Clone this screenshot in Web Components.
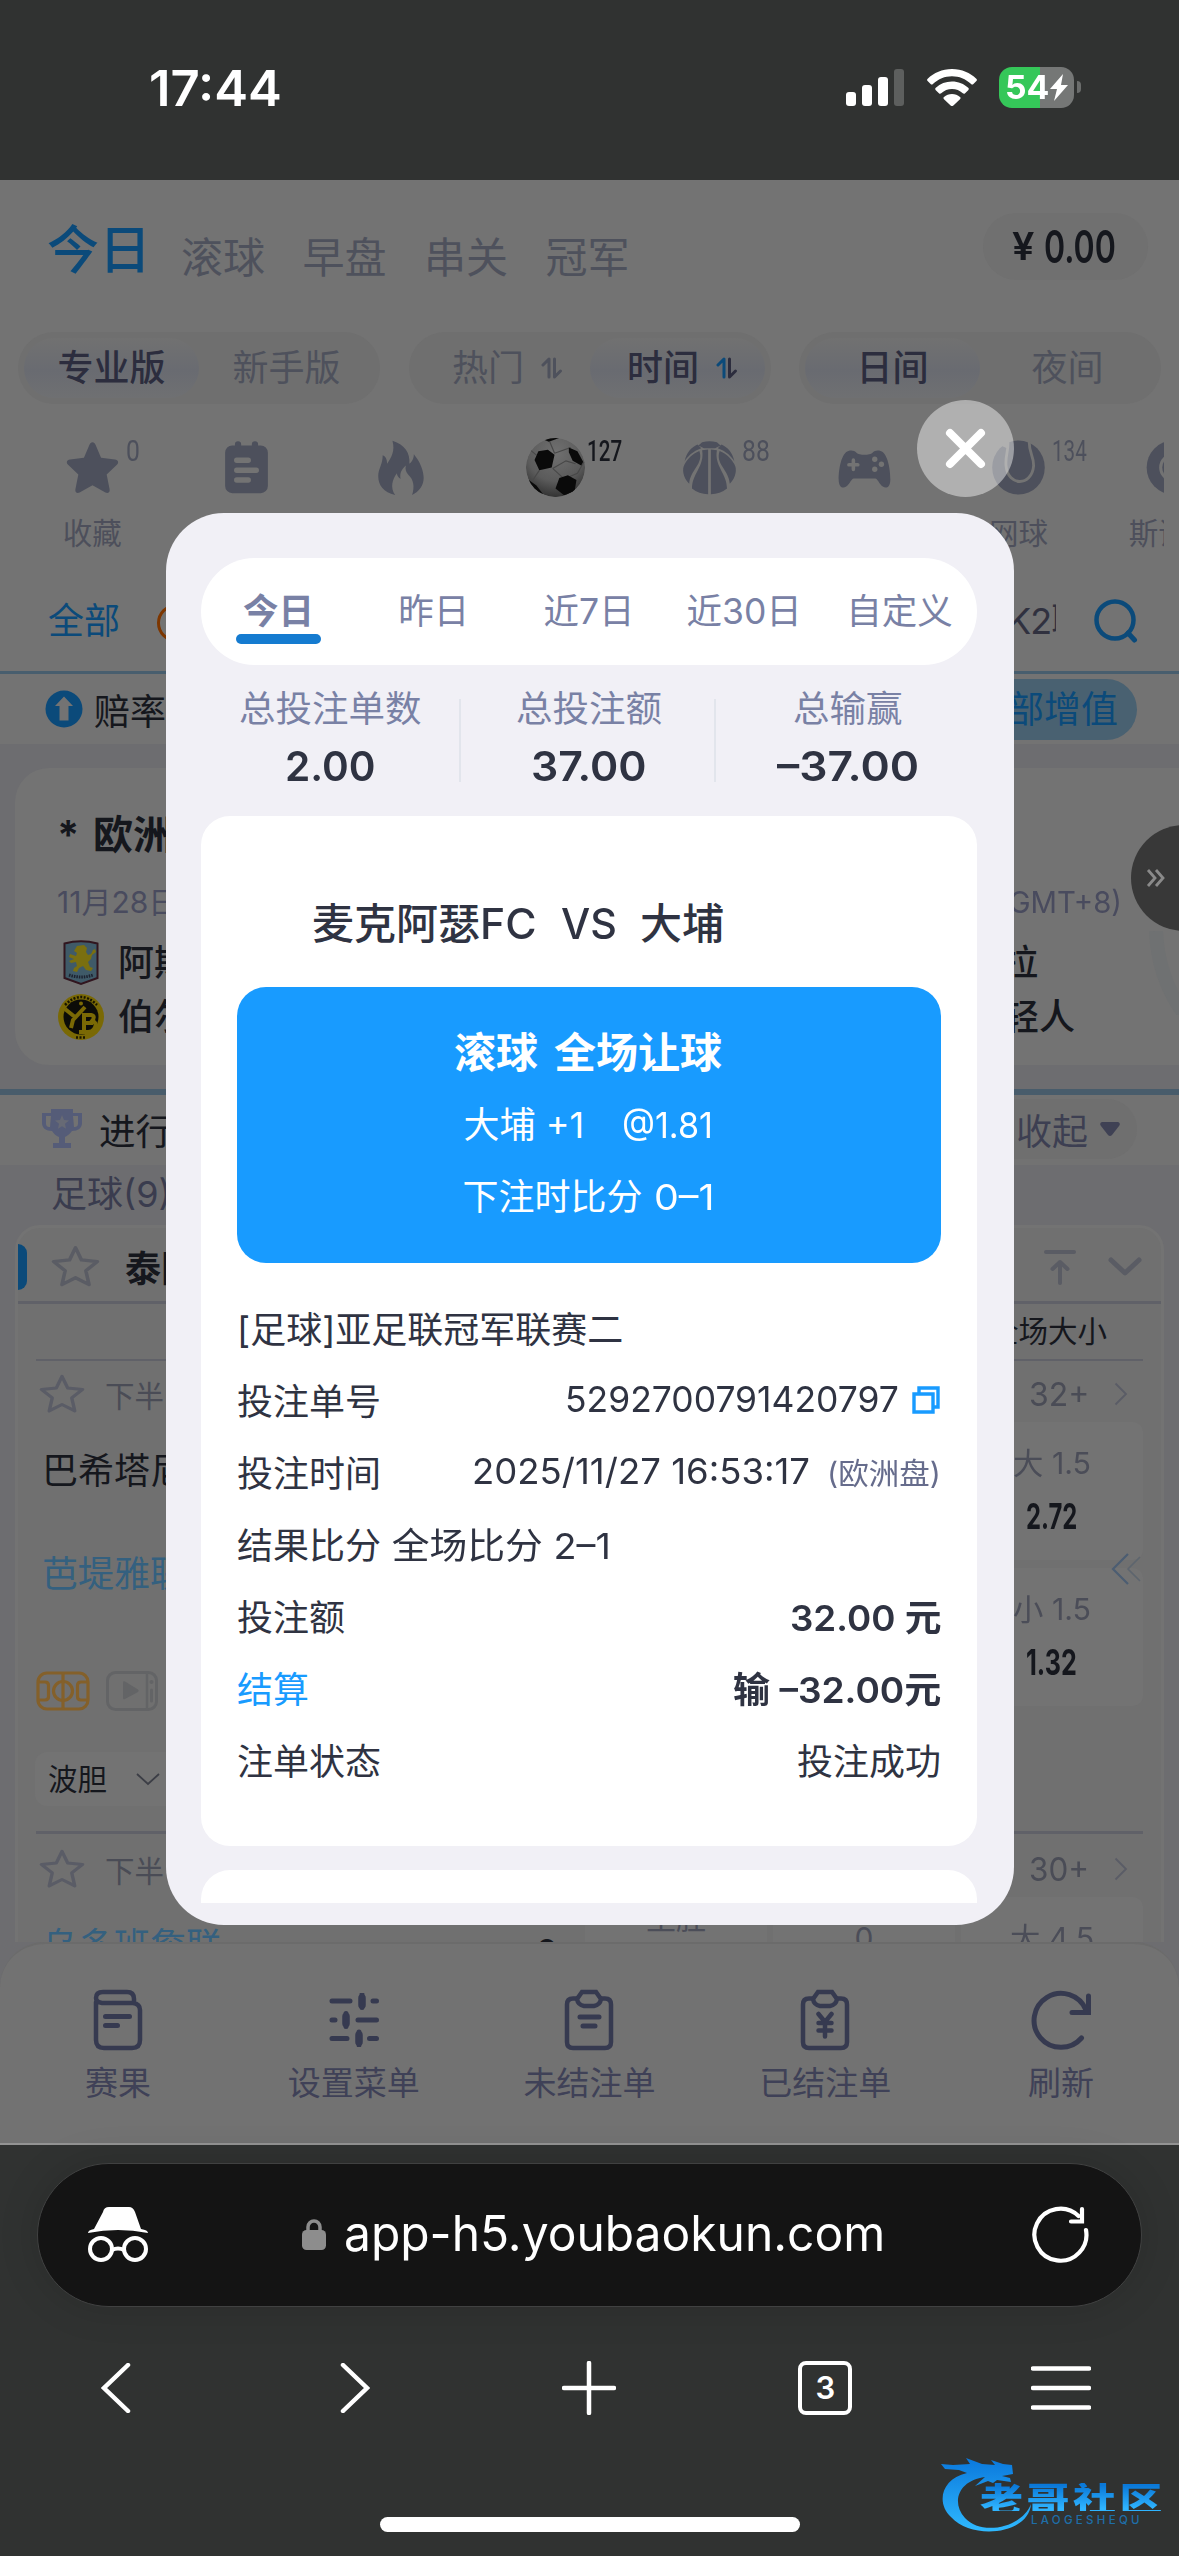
<!DOCTYPE html>
<html lang="zh-CN">
<head>
<meta charset="utf-8">
<title>已结注单</title>
<style>
html,body{margin:0;padding:0;background:#303231}
body{width:1179px;height:2556px;overflow:hidden;font-family:Inter,"Noto Sans CJK SC",sans-serif;
--ink:#15171d;--mute:#4e515c;--blue:#0b4a7a;--page:#737373;--grey:#6d6d70;--line:#606168;--text:#2f3342;--sky:#189bff}
</style>
</head>
<body>
<app-screen></app-screen>
<script>
const define=(name,css,html,setup)=>{
  const t=document.createElement('template');
  t.innerHTML=`<style>:host{display:block;box-sizing:border-box}*{box-sizing:border-box}svg{display:block;flex:none}${css}</style>${html}`;
  customElements.define(name,class extends HTMLElement{
    constructor(){super();this.attachShadow({mode:'open'}).appendChild(t.content.cloneNode(true))}
    connectedCallback(){if(setup)setup.call(this,this.shadowRoot)}
  });
};

/* Single line of text squeezed or stretched to a given width (w, in px). */
define('fit-text',':host{display:inline-block;white-space:pre;flex:none;text-align:left}span{display:inline-block;transform-origin:0 50%;white-space:pre}','<span><slot></slot></span>',function(r){
  const s=r.querySelector('span'),w=+this.getAttribute('w');
  const n=s.offsetWidth;
  this.style.width=w+'px';
  if(n)s.style.transform=`scaleX(${w/n})`;
});

/* Icon set */
const star='M32 3.5c1.7 0 2.6 1.2 3.4 2.8l6.2 14.2 15.6 1.7c3.8.5 4.6 3.6 2.2 5.8L47.9 38.6l3.3 16c.6 3.600-2 5-4.700 3.600L32 50.200 17.500 58.200c-2.700 1.400-5.300 0-4.700-3.600l3.300-16L4.600 28c-2.400-2.200-1.600-5.300 2.200-5.800l15.600-1.700 6.200-14.200C29.400 4.700 30.300 3.500 32 3.500z';
const icons={
 star:[64,62,`<path fill="currentColor" d="${star}"/>`],
 starline:[64,62,'<path fill="none" stroke="currentColor" stroke-width="4.500" stroke-linejoin="round" d="M32 5l7.500 17 20 2.200-14.500 12.600 4 19.200-17-9.500-17 9.500 4-19.200L4.500 24.200l20-2.200z"/>'],
 note:[64,62,'<path fill="currentColor" d="M16 7h3V6a3.500 3.500 0 0 1 7 0v1h12V6a3.500 3.500 0 0 1 7 0v1h3a8 8 0 0 1 8 8v36a8 8 0 0 1-8 8H16a8 8 0 0 1-8-8V15a8 8 0 0 1 8-8z"/><path stroke="#737373" stroke-width="6" stroke-linecap="round" d="M21 23h13M21 34h22M21 44.500h13"/>'],
 fire:[64,62,'<path fill="currentColor" d="M23 3c14 4 20 13 19 24 4-3 5-7 5-10 7 8 11 17 11 25 0 8-5 14-13 18 3-8 2-16-4-21-3-3-4-6-3-10-5 4-7 8-6 14-3-2-4-4-4-6-5 6-8 15-2 23C13 57 7 50 7 40c0-8 5-12 5-22 3 1 5 4 5 9 5-7 9-13 6-24z"/>'],
 soccer:[64,64,'<defs><radialGradient id="g" cx="50%" cy="25%" r="80%"><stop offset="0" stop-color="#707070"/><stop offset=".6" stop-color="#5b5b5b"/><stop offset="1" stop-color="#2c2c2c"/></radialGradient><clipPath id="c"><circle cx="32" cy="32" r="31"/></clipPath></defs><g clip-path="url(#c)"><circle cx="32" cy="32" r="31" fill="url(#g)"/><path fill="none" stroke="#484848" stroke-width="1.200" d="M31 17l17-6M29 33l12 11M15 35l-8 12M12 19L6 14M31 17l-5-12M41 44l14-6 7-12M29 33l14-8 10 3"/><path fill="#0a0a0a" d="M14 15l10-1.500 7 5-3 13.500-13 3-5-11zM46 11l9 4 6 11-2 4-9-5-4-9zM36 43l9-3 9 5-2 12-11 4-9-7zM4 45l8 6 7 9-2 3L3 53zM20 3l10-3 6 1-11 4z"/></g>'],
 basket:[64,62,'<path fill="currentColor" d="M24 4.500a29 29 0 0 1 16 0l4 3.500-6 3H26l-6-3zM19 7l4 4C14 14 8 20 5 25 7 16 12 10 19 7zM45 7l-4 4c9 3 15 9 18 14C57 16 52 10 45 7zM24 13l6.500-.800V60C24 60 18 58 13 54 13 38 27 30 24 13zM40 13l-6.500-.800V60C40 60 46 58 51 54 51 38 37 30 40 13zM21 14C26 28 11 34 10 49 3 42 2 33 5 28c4-6 8-11 16-14zM43 14C38 28 53 34 54 49c7-7 8-16 5-21-4-6-8-11-16-14z"/>'],
 pad:[64,62,'<path fill="currentColor" d="M14 13c4-1 7 0 9 2 3 3 15 3 18 0 2-2 5-3 9-2 8 2 11 20 11 31 0 9-5 10-8 8-5-3-6-9-9-9H20c-3 0-4 6-9 9-3 2-8 1-8-8 0-11 3-29 11-31z"/><g stroke="#737373" stroke-width="4" stroke-linecap="round"><path d="M19.500 23v10M14.500 28h10"/></g><g fill="#737373"><circle cx="43.500" cy="22" r="3"/><circle cx="43.500" cy="33" r="3"/><circle cx="51" cy="27.500" r="3"/></g>'],
 tennis:[64,62,'<circle cx="32" cy="31" r="29.500" fill="currentColor"/><path fill="none" stroke="#737373" stroke-width="3.200" d="M20 2c1 12-3 15-2 27 2 23 29 23 31 0 0-11-5-13-5-26"/><path fill="#737373" d="M14.500 0L20 0l1 6-2 4-5-2z"/>'],
 snooker:[64,62,'<circle cx="32" cy="31" r="29" fill="currentColor"/><circle cx="32" cy="31" r="15" fill="#737373"/><circle cx="32" cy="31" r="11.500" fill="currentColor"/>'],
 sort:[22,22,'<path fill="none" stroke="var(--a,currentColor)" stroke-width="3" stroke-linejoin="round" stroke-linecap="round" d="M2 8l6-6v18"/><path fill="none" stroke="currentColor" stroke-width="3" stroke-linejoin="round" stroke-linecap="round" d="M13.500 2v18l6-6"/>'],
 search:[44,44,'<circle cx="21" cy="21" r="18.500" fill="none" stroke="currentColor" stroke-width="4.500"/><path stroke="currentColor" stroke-width="5" stroke-linecap="round" d="M34 34l6.500 7"/>'],
 trophy:[40,40,'<path fill="currentColor" d="M9 0h22v4h9v10c0 5-4 8-10 8-2 3-5 5-7 6v6h6v5H11v-5h6v-6c-3-1-5-3-7-6-6 0-10-3-10-8V4h9zM9 7H4v7c0 3 1 4 4 4zM31 7l1 11c3 0 4-1 4-4V7z"/><path fill="#737373" opacity=".6" d="M20 6l2 5 5 .400-4 3.400 1 5-4-2.500-4 2.500 1-5-4-3.400 5-.400z"/>'],
 top:[32,36,'<path fill="none" stroke="currentColor" stroke-width="4" stroke-linecap="round" stroke-linejoin="round" d="M2 3h28M16 34V14M8.500 20L16 13l7.500 7"/>'],
 down:[34,20,'<path fill="none" stroke="currentColor" stroke-width="5" stroke-linecap="round" stroke-linejoin="round" d="M3 3l14 13L31 3"/>'],
 next:[14,24,'<path fill="none" stroke="#5a5c66" stroke-width="1.800" d="M1.500 1.500l10.500 10.500-10.500 10.500"/>'],
 pitch:[54,40,'<g fill="none" stroke="currentColor" stroke-width="3.200"><rect x="2" y="2" width="50" height="36" rx="9"/><circle cx="27" cy="20" r="9.500"/><path d="M27 2v36M2 11h7q3.500 0 3.500 3.500v11q0 3.500-3.500 3.500H2M52 11h-7q-3.500 0-3.500 3.500v11q0 3.500 3.500 3.500h7"/></g>'],
 play:[52,40,'<rect x="1.500" y="1.500" width="49" height="37" rx="8" fill="none" stroke="currentColor" stroke-width="3"/><path stroke="currentColor" stroke-width="2.500" d="M41 2v36"/><path fill="currentColor" d="M17 11.500q0-2 2-1l13 8q1.500 1.200 0 2.400l-13 7q-2 1-2-1z"/><circle cx="45.500" cy="11" r="2" fill="currentColor"/><path stroke="currentColor" stroke-width="3" stroke-linecap="round" d="M45.500 19v11"/>'],
 copy:[28,28,'<path fill="none" stroke="#189bff" stroke-width="3.400" d="M2 8h19v18H2zM7 7V2h19v19h-4"/>'],
 result:[50,62,'<g fill="none" stroke="currentColor" stroke-width="4.500" stroke-linecap="round" stroke-linejoin="round"><path d="M3 13v38q0 8 8 8h28q8 0 8-8V21q0-6-7-7H9q-6-1-6-5 0-6 7-6h24q7 0 7 7v4"/><path stroke-width="5" d="M12.500 27.500h24M12.500 36.500h12"/></g>'],
 sliders:[50,54,'<g stroke="currentColor" stroke-width="5" stroke-linecap="round"><path d="M3 8h18M33 1.500v13M44 8h3.500M3 27h3M17 20.500v13M29 27h18.500M3 45.500h15M30 39v13M40.500 45.500h7"/></g><g stroke="currentColor" stroke-width="7.500" stroke-linecap="round"><path d="M33 5v7M17 23.500v7M30 42v7"/></g>'],
 clip:[50,62,'<g fill="none" stroke="currentColor" stroke-width="4.500" stroke-linecap="round"><path d="M13 9.500H9q-6 0-6 6V53q0 6 6 6h32q6 0 6-6V15.500q0-6-6-6h-4"/><path d="M18 3h14l5 7q-1 6-7 7H20q-6-1-7-7z"/><path stroke-width="5" d="M16 28h19M19 37h12"/></g>'],
 clipyen:[50,62,'<g fill="none" stroke="currentColor" stroke-width="4.500" stroke-linecap="round"><path d="M13 9.500H9q-6 0-6 6V53q0 6 6 6h32q6 0 6-6V15.500q0-6-6-6h-4"/><path d="M18 3h14l5 7q-1 6-7 7H20q-6-1-7-7z"/><path d="M18.500 25l6.500 8 6.500-8M25 33v14.500M18.500 34h13M18.500 41.500h13"/></g>'],
 reload:[62,62,'<path fill="none" stroke="currentColor" stroke-width="5" stroke-linecap="round" d="M51.500 49A27 27 0 1 1 56 21M58.500 7v16.500H42"/>'],
 spy:[60,56,'<path fill="#fff" d="M15 5q1-5 6-5h20q4 0 6 5l6 17q7 1 7 4-30-6-60 0 0-3 6-4z"/><g fill="none" stroke="#fff" stroke-width="4"><circle cx="13" cy="42" r="11"/><circle cx="47" cy="42" r="11"/><path d="M24 43q6-3 12 0"/></g>'],
 lock:[26,32,'<rect x="1" y="11" width="24" height="20" rx="4.500" fill="#8d8d8d"/><path fill="none" stroke="#8d8d8d" stroke-width="3.500" d="M7 13V8a6 6 0 0 1 12 0v5"/>'],
 refresh:[58,58,'<path fill="none" stroke="#fff" stroke-width="4.200" stroke-linecap="round" d="M54 24A26 26 0 1 1 46.500 10M50 3v12.500H39"/>'],
 crest:[36,46,'<path fill="#3f5a68" stroke="#31161f" stroke-width="2" d="M1.500 3.500Q18-1 34.500 3.500V38L18 44 1.500 38z"/><path fill="#7a6f10" d="M14 6l7-1 3 3-1 4 2 3 3-1 2-4 2-1 1 3-4 3-1 4-3 3 2 5 3 1-2 3-5-1-3-4-4 2-2 4-4-1 1-3 3-2-1-4-5 1-2-2 5-2-5-2 1-3 6 2 1-3-3-2z"/><path stroke="#1c2230" stroke-width="3" stroke-dasharray="1.500 1" d="M6 35q12 4 24 0" fill="none"/>'],
 yb:[48,48,'<circle cx="24" cy="24" r="23" fill="#7a6905"/><circle cx="24" cy="24" r="17.500" fill="#0c0c08"/><path fill="none" stroke="#7a6905" stroke-width="4" d="M8 16l10 8M28 14L16 27l-2 8M25 22h9q5 1 1 6 6 2 2 8-2 3-6 3h-9M27 22v16M25 30h11"/><circle cx="24" cy="10.500" r="2" fill="#7a6905"/><path fill="none" stroke="#181500" stroke-width="2.500" stroke-dasharray="2 1.500" d="M8 12Q24-4 40 12M19 44.500h10"/>'],
 up:[38,38,'<circle cx="19" cy="19" r="18.500" fill="#0b4a7a"/><path fill="#737373" d="M19 6.500l9 9.500h-4.500v14.500h-9V16H10z"/>'],
 chevrons:[30,32,'<path fill="none" stroke="#4c5d72" stroke-width="2.200" d="M17 1L2 16l15 15"/><path fill="none" stroke="#5d656e" stroke-width="1.600" d="M29 4L17 16l12 12"/>']
};
define('ui-icon',':host{display:block;flex:none}','<div></div>',function(r){
  const [vw,vh,body]=icons[this.getAttribute('name')],w=this.getAttribute('w')||vw,h=this.getAttribute('h')||vh;
  r.querySelector('div').innerHTML=`<svg width="${w}" height="${h}" viewBox="0 0 ${vw} ${vh}" preserveAspectRatio="none">${body}</svg>`;
});

define('status-bar',`
:host{height:180px;background:#303231;display:flex;align-items:flex-start;padding:0 98px 0 149px;color:#fff}
.t{margin-top:63px;font:600 50px/50px Inter;margin-right:auto}
.sig{margin:69px 23px 0 0}.wifi{margin:69px 22px 0 0}
.bat{width:75px;height:41px;margin-top:67px;border-radius:13px;background:linear-gradient(90deg,#35c759 41px,#757776 41px);display:flex;align-items:center;padding-left:6px;font:700 33px/41px Inter}
.nub{width:4px;height:12px;border-radius:0 4px 4px 0;background:#6b6d6c;margin:81px 0 0 3px}`,`
<fit-text class="t" w="133">17:44</fit-text>
<svg class="sig" width="58" height="37"><g fill="#fff"><rect y="23" width="10" height="14" rx="3"/><rect x="16" y="16" width="10" height="21" rx="3"/><rect x="32" y="8" width="10" height="29" rx="3"/></g><rect x="48" width="10" height="37" rx="3" fill="#5d5f5e"/></svg>
<svg class="wifi" width="50" height="37" viewBox="0 0 50 37"><path fill="#fff" d="M25 0c10 0 18 3.800 24.300 9.700.8.800.8 1.600.1 2.300l-3 3c-.7.700-1.600.700-2.300 0C38.600 10 32.200 7.300 25 7.300S11.400 10 5.900 15c-.7.700-1.600.7-2.300 0l-3-3c-.7-.7-.7-1.500.1-2.300C7 3.800 15 0 25 0zM25 12.500c6.300 0 12 2.400 16.200 6.300.8.800.8 1.600 0 2.400l-3.100 3c-.7.700-1.500.7-2.300.1A16 16 0 0 0 25 20a16 16 0 0 0-10.800 4.300c-.8.600-1.600.6-2.300-.1l-3.100-3c-.8-.8-.8-1.600 0-2.400A23.700 23.700 0 0 1 25 12.500zM25 25c3 0 5.800 1.100 8 3 .800.700.8 1.500 0 2.300l-6.600 6.200c-.9.800-1.900.8-2.800 0L17 30.300c-.8-.8-.8-1.600 0-2.300 2.200-1.900 5-3 8-3z"/></svg>
<div class="bat"><fit-text w="44">54</fit-text><svg width="20" height="27" viewBox="0 0 20 27"><path fill="#fff" d="M14 0L1 15h7L5 27l14-16h-7z"/></svg></div><div class="nub"></div>`);

define('match-tabs',`
:host{height:152px;display:flex;align-items:flex-start;padding-left:47px;color:var(--mute);font-size:42px;line-height:42px}
b{font-weight:500;font-size:52px;line-height:52px;color:var(--blue);margin:45px 30px 0 0}
span{margin:57px 37.500px 0 0}
.bal{margin:33px 31px 0 auto;width:165px;height:67px;border-radius:34px;background:#707070;display:flex;align-items:center;justify-content:center;gap:10px;font:600 45px/67px Inter;color:var(--ink);padding-right:3px}
.y{font-size:38px}`,`
<b>今日</b><span>滚球</span><span>早盘</span><span>串关</span><span>冠军</span><div class="bal"><fit-text class="y" w="22">¥</fit-text><fit-text w="72">0.00</fit-text></div>`);

define('filter-pill',`
:host{height:72px;width:362px;border-radius:36px;background:#6f6f6f;display:flex;padding:6px;font-size:36px;line-height:60px;color:var(--mute)}
::slotted(*){flex:1;display:flex!important;justify-content:center;align-items:center;gap:17px;border-radius:30px}
::slotted([on]){font-weight:500;color:#2c2d3e;--a:#0b4a7a;background:linear-gradient(#717171,#696b71 55%,#6f7072)}`,'<slot></slot>');
define('filter-row',':host{height:72px;display:flex;gap:28.500px;padding-left:18px}.i{padding-left:11px}',`
<filter-pill><div on>专业版</div><div>新手版</div></filter-pill>
<filter-pill><div class="i">热门<ui-icon name="sort"></ui-icon></div><div class="i" on>时间<ui-icon name="sort"></ui-icon></div></filter-pill>
<filter-pill><div on>日间</div><div>夜间</div></filter-pill>`);

define('sport-item',`
:host{width:154.400px;flex:none;display:flex;flex-direction:column;align-items:center;color:#4d505c;white-space:nowrap}
.i{height:62px;display:flex;align-items:center;position:relative}
.n{position:absolute;left:62px;top:0;font:400 30px/30px Roboto;color:#4d505c}
:host([on]) .n{color:var(--ink);font-weight:500}
.l{font-size:29.500px;line-height:30px;margin-top:20px;color:#4d4f5b}`,
'<div class="i"><slot name="icon"></slot><div class="n"><slot name="n"></slot></div></div><div class="l"><slot></slot></div>');
define('sport-nav',':host{height:166px;display:flex;padding:32px 0 0 15px;margin-right:15px;overflow:hidden}',
[['star',57,57,'0',14,'收藏'],['note',57,57],['fire',57,59],['soccer',61,61,'127',35,'',1],['basket',59,58,'88',28],['pad',57,57],['tennis',57,57,'134',35,'网球'],['snooker',57,57,'',0,'斯诺克']]
.map(([i,w,h,n,nw,l,on])=>`<sport-item ${on?'on':''}><ui-icon slot="icon" name="${i}" w="${w}" h="${h}"></ui-icon>${n?`<fit-text slot="n" w="${nw}">${n}</fit-text>`:''}${l||''}</sport-item>`).join(''));

define('league-strip',`
:host{height:104px;border-bottom:3px solid #485e6e;display:flex;align-items:center;padding:0 41px 0 48px;font-size:36px;line-height:36px;color:var(--blue)}
i{width:38px;height:38px;border:3.500px solid #7d3600;border-radius:50%;margin:4px auto 0 37px}
.k{width:49px;overflow:hidden;white-space:nowrap;color:#30313f;margin-right:38px;letter-spacing:-1px}`,
'<span>全部</span><i></i><div class="k">K2联</div><ui-icon name="search"></ui-icon>');

define('odds-bar',`
:host{height:70px;display:flex;align-items:center;padding:0 42px 0 45px;font-size:36px;color:var(--ink)}
span{margin-left:11px;margin-right:auto}
.p{height:61px;border-radius:31px;background:#496171;color:var(--blue);line-height:61px;padding:0 19px;width:220px;text-align:right;font-size:37px}`,
'<ui-icon name="up"></ui-icon><span>赔率</span><div class="p">全部增值</div>');

define('match-card',`
:host{height:345px;background:var(--grey);padding:24px 0 24px 15px;color:var(--ink)}
.c{height:297px;background:var(--page);border-radius:34px 0 0 34px;padding:47px 57px 0 42px;position:relative}
.h{font-size:40px;font-weight:700;line-height:40px;display:flex}.h i{font-style:normal;width:36px}
.d{font-size:30px;line-height:30px;margin-top:32px;color:#494b5e;display:flex;justify-content:space-between}
.r{display:flex;align-items:center;font-size:36px;font-weight:500;line-height:54px;height:54px}
.i{width:48px;display:flex;justify-content:center;margin-right:13px}
.e{margin-left:auto}
.arc{position:absolute;right:0;top:163px}`,`
<div class="c"><svg class="arc" width="30" height="84"><path d="M7 0Q9 48 36 84" fill="none" stroke="#6f7172" stroke-width="14"/></svg>
<div class="h"><i>*</i>欧洲</div>
<div class="d"><span>11月28日</span><fit-text w="124">(GMT+8)</fit-text></div>
<div class="r" style="margin-top:19px"><div class="i"><ui-icon name="crest"></ui-icon></div>阿斯<span class="e" style="margin-right:84px">拉</span></div>
<div class="r"><div class="i"><ui-icon name="yb"></ui-icon></div>伯尔<span class="e" style="margin-right:47px">轻人</span></div>
</div>`);

define('progress-bar',`
:host{height:76px;border-top:6px solid #485c6b;background:#727272;display:flex;align-items:center;padding:0 42px 2px;font-size:36.500px;color:var(--ink)}
span{margin:0 auto 0 17px}
.p{height:60px;width:190px;border-radius:30px;background:#6f6f6f;display:flex;align-items:center;justify-content:flex-end;gap:12px;padding-right:17px;color:#3d3f52;font-size:36px}`,`
<ui-icon name="trophy" style="color:#555c78"></ui-icon><span>进行中</span><div class="p">收起<svg width="20" height="14"><path fill="#3f4154" d="M2 0h16q3 1 1 4l-7 9q-2 2-4 0L1 4Q-1 1 2 0z"/></svg></div>`);

define('meta-row',`
:host{height:61px;display:flex;align-items:center;padding:4px 15px 0 2px;color:#4a4c56;font-size:29.500px}
.s{margin-right:19px;color:#5a5c66}.n{margin-left:auto;font-size:33px;margin-right:25px}`,
'<ui-icon class="s" name="starline" w="48" h="42"></ui-icon>下半<fit-text class="n" w="60"><slot></slot></fit-text><ui-icon name="next"></ui-icon>');
define('odd-cell',`
:host{width:182px;height:138px;background:#737373;border-radius:10px;display:flex;flex-direction:column;align-items:center;padding-top:26px;color:#4b4d58;font-size:30px;line-height:30px;white-space:pre}
b{font:700 36px/36px Inter;color:#15171d;margin-top:20px;margin-right:2px}`,
'<slot></slot><b><slot name="v"></slot></b>');
define('league-card',`
:host{height:777px;background:var(--grey);padding:0 15px;color:var(--ink);overflow:hidden}
.t{height:60px;padding-left:36px;font-size:36px;line-height:58px;color:#3a3c4e}
.c{height:730px;border:3px solid #737373;border-radius:25px 25px 0 0;background:#707070}
.h{height:76px;display:flex;align-items:center;border-bottom:3px solid var(--line);font-size:36px;font-weight:700;padding:4px 19px 0 0;color:#5a5c64}
.tag{width:9px;height:46px;border-radius:0 12px 12px 0;background:var(--blue)}
.h span{color:var(--ink);margin:0 auto 2px 24px}
.b{margin:0 18px}
.s{height:57px;border-bottom:2px solid var(--line);text-align:right;padding-right:36px;font-size:29.500px;line-height:54px}
.m{height:412px;display:flex;justify-content:space-between;border-bottom:3px solid var(--line);margin-bottom:2px;position:relative}
.l{padding-left:6px;font-size:36px;line-height:36px}
.l div{margin-top:31px}.l .w{color:#34607f;margin-top:67px}
.l .ic{display:flex;gap:16px;margin:79px 0 0 -6px}
.l .sel{margin:41px 0 0 -7px;background:#737373;border-radius:12px;height:54px;width:200px;display:flex;align-items:center;gap:29px;padding-left:13px;font-size:29.500px}
.cells{display:flex;flex-direction:column;gap:8px}
.arr{position:absolute;right:2px;top:131px}
.v{display:flex;gap:6px}
.v .l{flex:1;display:flex;justify-content:space-between;padding-right:22px;color:#34607f}
.v .l b{color:var(--ink);margin-top:35px;font-size:30px}`,`
<div class="t">足球(9)</div>
<div class="c"><div class="h"><div class="tag"></div><ui-icon name="starline" w="51" h="45" style="margin-left:23px"></ui-icon><span>泰国</span><ui-icon name="top" style="margin-right:32px"></ui-icon><ui-icon name="down"></ui-icon></div>
<div class="b"><div class="s">全场大小</div>
<meta-row>32+</meta-row>
<div class="m"><div class="l"><div>巴希塔尼</div><div class="w">芭堤雅联</div><div class="ic"><ui-icon name="pitch" style="color:#84602a"></ui-icon><ui-icon name="play" style="color:#636466"></ui-icon></div><div class="sel">波胆<svg width="24" height="13"><path d="M1 1l11 10L23 1" fill="none" stroke="#3c3e46" stroke-width="1.800"/></svg></div></div>
<div class="cells"><odd-cell><fit-text w="78">大 1.5</fit-text><fit-text slot="v" w="51">2.72</fit-text></odd-cell><odd-cell><fit-text w="78">小 1.5</fit-text><fit-text slot="v" w="51">1.32</fit-text></odd-cell></div><ui-icon class="arr" name="chevrons"></ui-icon></div>
<meta-row>30+</meta-row>
<div class="v"><div class="l"><div>乌多班詹联</div><b>0</b></div><odd-cell style="padding-top:6px">主胜</odd-cell><odd-cell>0</odd-cell><odd-cell><fit-text w="84">大 4.5</fit-text></odd-cell></div>
</div></div>`);

define('nav-item',':host{flex:1;display:flex;flex-direction:column;align-items:center;font-size:33px;line-height:33px;color:#3f4157}.i{height:62px;display:flex;align-items:center;margin-bottom:16px;color:#363a50}',
'<div class="i"><slot name="icon"></slot></div><slot></slot>');
define('bottom-nav',':host{height:203px;background:var(--grey)}div{height:201px;background:#727272;border-radius:45px 45px 0 0;border-top:2px solid #6b6b6b;display:flex;padding-top:45px}:host{border-bottom:2px solid #939393}',
'<div>'+[['result','赛果'],['sliders','设置菜单'],['clip','未结注单'],['clipyen','已结注单'],['reload','刷新']].map(([i,l])=>`<nav-item><ui-icon slot="icon" name="${i}"></ui-icon>${l}</nav-item>`).join('')+'</div>');

define('browser-chrome',`
:host{height:411px;background:#303231;padding:18px 37px 0;color:#fff}
.a{height:144px;border-radius:72px;background:#141414;border:1.500px solid #404141;display:flex;align-items:center;padding:0 51px 0 50px;box-shadow:0 0 40px #0002}
.u{font:400 49px/60px Inter;margin:-2px 147px 0 17px}
.lk{margin-left:auto}
.b{height:60px;margin-top:51px;display:flex;margin-left:-37px;margin-right:-37px}
.b>div{flex:1;display:flex;align-items:center;justify-content:center}
.tab{width:54px;height:54px;border:4.500px solid #fff;border-radius:8px;text-align:center;font:600 31px/46px Inter}
.home{width:420px;height:15px;border-radius:8px;background:#fff;margin:99px auto 0}`,`
<div class="a"><ui-icon name="spy"></ui-icon><ui-icon class="lk" name="lock"></ui-icon><fit-text class="u" w="541">app-h5.youbaokun.com</fit-text><ui-icon name="refresh"></ui-icon></div>
<div class="b"><div><svg style="margin-right:3px" width="30" height="50"><path d="M27 2L3 25l24 23" fill="none" stroke="#fff" stroke-width="4.500" stroke-linecap="round"/></svg></div>
<div><svg style="margin-left:3px" width="30" height="50"><path d="M3 2l24 23L3 48" fill="none" stroke="#fff" stroke-width="4.500" stroke-linecap="round"/></svg></div>
<div><svg width="54" height="54"><path d="M27 2v50M2 27h50" fill="none" stroke="#fff" stroke-width="4.500" stroke-linecap="round"/></svg></div>
<div><div class="tab">3</div></div>
<div><svg width="60" height="46"><path d="M2 3.500h56M2 23h56M2 42.500h56" stroke="#fff" stroke-width="4.500" stroke-linecap="round"/></svg></div></div>
<div class="home"></div>`);

/* Betting record dialog */
define('stat-cell',':host{flex:1;text-align:center;font-size:36.500px;line-height:36px;color:#7981a5}div{margin-top:19px;font:600 41px/41px Inter,sans-serif;color:#2f3342}',
'<slot></slot><div><slot name="v"></slot></div>');
define('bet-row',':host{height:72px;display:flex;align-items:center;justify-content:space-between;font-size:36px;color:var(--text);white-space:pre}.v{display:flex;align-items:center}:host([bold]) .v{font-weight:600}',
'<span><slot></slot></span><div class="v"><slot name="v"></slot></div>');
define('bet-dialog',`
:host{position:absolute;left:166px;top:513px;width:848px;height:1412px;border-radius:58px;background:#f1f0f6;padding:45px 37px 0 35px}
.tabs{height:107px;border-radius:54px;background:#fff;display:flex;color:#7981a5;font-size:35.500px;margin-bottom:1px}
.tabs div{flex:1;display:flex;flex-direction:column;align-items:center;line-height:35px;padding-top:36px;white-space:nowrap}
.tabs .on{font-weight:700}.tabs .on:after{content:"";width:85px;height:10px;border-radius:5px;background:#157bd0;margin-top:5px}
.stats{display:flex;padding-top:25px;height:150px}
i{width:2px;height:83px;background:#e2e5ec;margin:8px -1px 0}
i+stat-cell+i{margin:8px 2px 0 -4px}
.card{background:#fff;border-radius:29px;height:1030px;padding:66px 36px 0}
.tt{font-size:42px;font-weight:500;line-height:42px;color:var(--text);padding:21px 0 42px 75px;white-space:pre;height:105px}
.box{height:276px;border-radius:29px;background:var(--sky);color:#fff;display:flex;flex-direction:column;align-items:center;padding:30px 2px 0 0;font-size:36px;line-height:72px;white-space:pre;margin-bottom:28px}
.box b{font-size:42px;line-height:72px;word-spacing:6px}
.box div{display:flex}
.next{height:33px;margin-top:24px;background:#fff;border-radius:29px 29px 0 0}
.x{position:absolute;right:0;top:-113px;width:97px;height:97px;border-radius:50%;background:rgba(255,255,255,.44)}`,`
<div class="x"><svg width="97" height="97"><path d="M33 33l31 31M64 33L33 64" stroke="#fff" stroke-width="8" stroke-linecap="round"/></svg></div>
<div class="tabs"><div class="on">今日</div><div>昨日</div><div>近7日</div><div>近30日</div><div>自定义</div></div>
<div class="stats"><stat-cell>总投注单数<fit-text slot="v" w="91">2.00</fit-text></stat-cell><i></i><stat-cell>总投注额<fit-text slot="v" w="116">37.00</fit-text></stat-cell><i></i><stat-cell>总输赢<fit-text slot="v" w="142">–37.00</fit-text></stat-cell></div>
<div class="card"><div class="tt">麦克阿瑟<fit-text w="57">FC</fit-text><fit-text w="24" aria-hidden="true"> </fit-text><fit-text w="56">VS</fit-text><fit-text w="23" aria-hidden="true"> </fit-text>大埔</div>
<div class="box"><b>滚球 全场让球</b><div><fit-text w="121">大埔 +1</fit-text><fit-text w="91" style="margin-left:37px">@1.81</fit-text></div><div><span>下注时比分</span><fit-text w="71"> 0–1</fit-text></div></div>
<bet-row>[足球]亚足联冠军联赛二</bet-row>
<bet-row>投注单号<fit-text slot="v" w="334">5292700791420797</fit-text><ui-icon slot="v" name="copy" style="margin:2px 1px 0 13px"></ui-icon></bet-row>
<bet-row>投注时间<fit-text slot="v" w="338">2025/11/27 16:53:17</fit-text><fit-text slot="v" w="114" style="font-size:30px;color:#666c8c;margin-left:17px">(欧洲盘)</fit-text></bet-row>
<bet-row>结果比分<fit-text w="230"> 全场比分 2–1</fit-text></bet-row>
<bet-row bold>投注额<fit-text slot="v" w="151">32.00 元</fit-text></bet-row>
<bet-row bold><span style="color:#189bff">结算</span><fit-text slot="v" w="208">输 –32.00元</fit-text></bet-row>
<bet-row>注单状态<span slot="v">投注成功</span></bet-row>
</div>
<div class="next"></div>`);

define('float-button',':host{position:absolute;left:1131px;top:825px;width:48px;height:106px;overflow:hidden}div{width:106px;height:106px;border-radius:50%;background:#383838;padding:43px 0 0 15px}',
'<div><svg width="20" height="20"><path d="M2 2l7 8-7 8M10 2l7 8-7 8" fill="none" stroke="#8a8a8a" stroke-width="2.800"/></svg></div>');

define('water-mark',`:host{position:absolute;left:940px;top:2452px;width:226px;height:80px}
.n{position:absolute;left:40px;top:27px;font:900 43px/36px "Noto Sans CJK SC",sans-serif;letter-spacing:3.500px;white-space:nowrap;transform:scaleY(.8);background:linear-gradient(#0a78d8 10%,#2fb4ff 90%);-webkit-background-clip:text;color:transparent}
.e{position:absolute;left:91px;top:62px;font:500 11.500px/12px Inter;letter-spacing:3.300px;color:#1e6ea8}`,`
<svg width="110" height="80" viewBox="0 0 110 80"><defs><linearGradient id="w" x2="0" y2="1"><stop offset="0" stop-color="#0a78dc"/><stop offset="1" stop-color="#2fb9ff"/></linearGradient></defs><path fill="url(#w)" d="M27 18C1 24-4 48 11 62c22 24 78 17 80-13-9 24-50 32-66 14C10 46 20 25 45 22l-10 9 13-5 5 2 4-3 14 2-1-4-8-2 11-2-1-9-9-1-12-4 4 5-13-1-16-6 4 6-17 1L1 9l4 5 14 1z" transform="translate(0 3)"/></svg>
<div class="n">老哥社区</div><div class="e">LAOGESHEQU</div>`);

define('app-screen',':host{width:1179px;height:2556px;position:relative;display:flex;flex-direction:column;overflow:hidden;background:var(--page)}:host>*{flex:none}',
`<status-bar></status-bar><match-tabs></match-tabs><filter-row></filter-row><sport-nav></sport-nav><league-strip></league-strip><odds-bar></odds-bar><match-card></match-card><progress-bar></progress-bar><league-card></league-card><bottom-nav></bottom-nav><browser-chrome></browser-chrome><float-button></float-button><bet-dialog></bet-dialog><water-mark></water-mark>`);
</script>
</body>
</html>
